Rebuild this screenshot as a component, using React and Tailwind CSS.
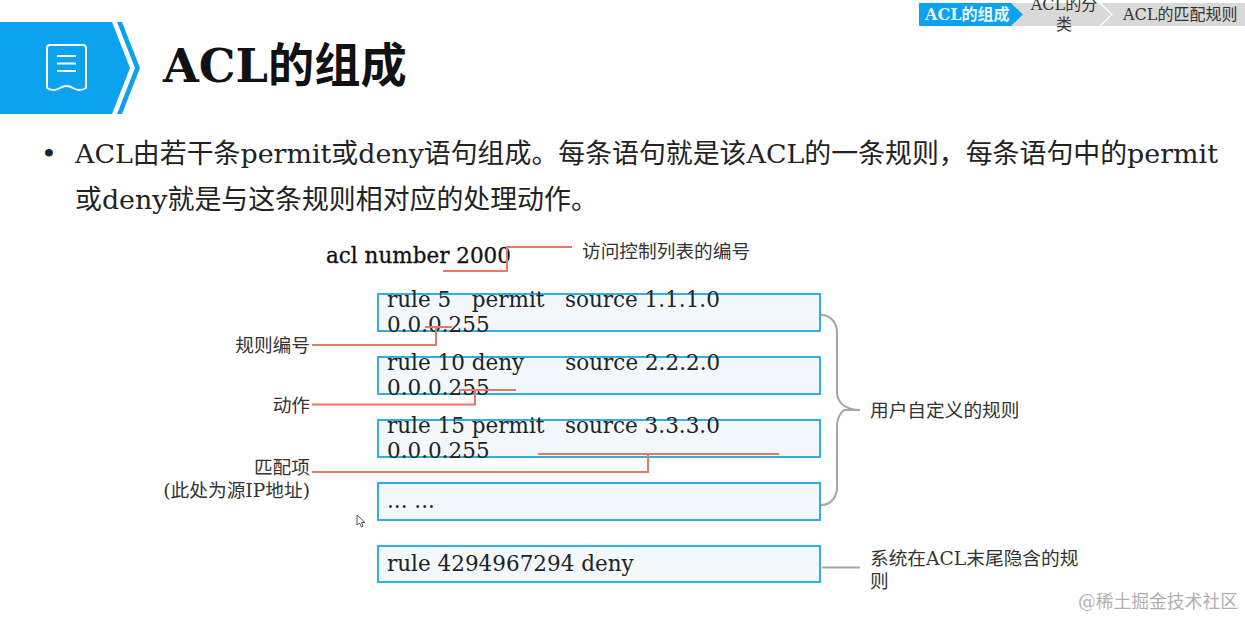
import React from "react";

const serif = "font-['DejaVu_Serif','Noto_Sans_CJK_SC',serif]";

const rules = [
  "rule 5   permit   source 1.1.1.0 0.0.0.255",
  "rule 10 deny      source 2.2.2.0 0.0.0.255",
  "rule 15 permit   source 3.3.3.0 0.0.0.255",
  "... ...",
];

function Breadcrumb() {
  return (
    <div className="absolute top-[3px] right-0 flex h-[23px] w-[326px] text-[16px] leading-[20px]">
      <div className="z-20 flex w-[104px] items-center pl-[6px] bg-[#0ba2ef] font-bold whitespace-nowrap text-[#e8f6fe] [clip-path:polygon(0_0,92px_0,104px_50%,92px_100%,0_100%)]">
        ACL的组成
      </div>
      <div className="relative z-10 -ml-[12px] flex w-[100px] items-center justify-center pl-[18px] pr-[12px] text-center text-[#333]">
        <div className="absolute inset-0 bg-[#d9d9d9] [clip-path:polygon(0_0,88px_0,100px_50%,88px_100%,0_100%,12px_50%)]"></div>
        <span className="relative">ACL的分类</span>
      </div>
      <div className="-ml-[10px] flex flex-1 items-center bg-[#d9d9d9] pl-[22px] whitespace-nowrap text-[#333] [clip-path:polygon(0_0,100%_0,100%_100%,0_100%,12px_50%)]">
        ACL的匹配规则
      </div>
    </div>
  );
}

function Banner() {
  return (
    <svg width="140" height="92" viewBox="0 0 140 92" className="shrink-0">
      <polygon points="0,0 112,0 130,46 112,92 0,92" fill="#0ba2ef" />
      <polygon points="117,0 122,0 140,46 122,92 117,92 135,46" fill="#0ba2ef" />
      <path
        d="M47 26a3 3 0 0 1 3-3h33a3 3 0 0 1 3 3v40q-6.5 4-13 0t-13 0t-13 0z"
        fill="none"
        stroke="white"
        strokeWidth="2"
        strokeLinejoin="round"
      />
      <path d="M57 34h19M57 41.5h19M57 49h19" stroke="white" strokeWidth="2" fill="none" />
    </svg>
  );
}

function Connectors() {
  return (
    <svg width="1245" height="396" viewBox="0 223 1245 396" className="absolute left-0 top-0 z-10" fill="none">
      <g stroke="#e8796a" strokeWidth="2">
        <path d="M443 271H507V247H572" />
        <path d="M312 345H436V327M425 327H452" />
        <path d="M312 404.5H475V390M459 390H516" />
        <path d="M312 472H648V454M538 454H779" />
      </g>
      <g stroke="#a6a6a6" strokeWidth="2">
        <path d="M821 315C831 315 837 323 837 333V392C837 402 845 410 860 410H845C843 410 837 416 837 426V487C837 497 831 505 821 505" />
        <path d="M822 567.5H860" />
      </g>
    </svg>
  );
}

function Cursor() {
  return (
    <svg width="10" height="14" viewBox="0 0 10 14" className="absolute left-[356px] top-[291px]" fill="white" stroke="#555" strokeWidth="1">
      <path d="M1 1V11L3.5 9L5.5 13L7 12L5.5 8.5H9Z" />
    </svg>
  );
}

function Diagram() {
  const label = "absolute text-[18.7px] leading-[23px] text-[#333]";
  const box = "flex items-center border-2 border-[#2fb0de] bg-[#f3f8fc] px-[8px] pb-[2px] text-[21.5px] leading-[25px] text-[#222]";
  return (
    <div className="relative h-[396px]">
      <Connectors />
      <div className="absolute left-[326px] top-[19px] text-[21.5px] leading-[28px] font-medium text-[#111] [-webkit-text-stroke:0.3px_#111]">
        acl number 2000
      </div>
      <div className={`${label} left-[582px] top-[17px]`}>访问控制列表的编号</div>
      <div className={`${label} right-[935px] top-[111px]`}>规则编号</div>
      <div className={`${label} right-[935px] top-[171px]`}>动作</div>
      <div className={`${label} right-[935px] top-[233px] text-right`}>
        匹配项
        <br />
        (此处为源IP地址)
      </div>
      <div className={`${label} left-[870px] top-[176px]`}>用户自定义的规则</div>
      <div className={`${label} left-[870px] top-[324px] w-[212px]`}>系统在ACL末尾隐含的规则</div>
      <Cursor />
      <div className="ml-[377px] flex w-[444px] flex-col gap-[24px] pt-[70px]">
        {rules.map((r) => (
          <div key={r} className={`${box} h-[39px]`}>
            <span className="whitespace-pre-wrap">{r}</span>
          </div>
        ))}
        <div className={`${box} h-[38px]`}>rule 4294967294 deny</div>
      </div>
    </div>
  );
}

export default function App() {
  return (
    <div className={`relative h-[619px] w-[1245px] overflow-hidden bg-white ${serif}`}>
      <Breadcrumb />
      <div className="flex h-[114px] items-end gap-[23px]">
        <Banner />
        <h1 className="pb-[18px] text-[46.2px] font-bold leading-[60px] text-[#111]">ACL的组成</h1>
      </div>
      <div className="flex pt-[17px] pl-[41px] text-[26.9px] leading-[46px] text-[#222]">
        <span className="w-[34px] shrink-0">•</span>
        <p className="w-[1150px]">
          ACL由若干条permit或deny语句组成。每条语句就是该ACL的一条规则，每条语句中的permit或deny就是与这条规则相对应的处理动作。
        </p>
      </div>
      <Diagram />
      <div className="absolute bottom-[6px] right-[7px] text-[17.8px] leading-[22px] text-[#b0b0b0]">@稀土掘金技术社区</div>
    </div>
  );
}
